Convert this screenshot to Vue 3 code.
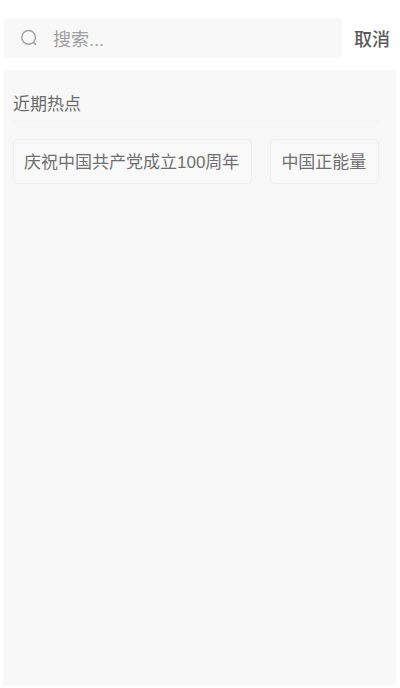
<script setup>
const tags = ['庆祝中国共产党成立100周年', '中国正能量']
</script>

<template>
  <div class="page">
    <header class="top">
      <div class="search">
        <svg class="icon" width="18" height="18" viewBox="0 0 18 18" fill="none" stroke="#a2a2a2" stroke-width="1.5" stroke-linecap="round">
          <circle cx="8.6" cy="8.4" r="6.8" />
          <path d="M13.6 13.4 L15.6 15.4" />
        </svg>
        <span class="placeholder">搜索...</span>
      </div>
      <span class="cancel">取消</span>
    </header>
    <main class="panel">
      <h2 class="title">近期热点</h2>
      <div class="tags">
        <span v-for="t in tags" :key="t" class="tag">{{ t }}</span>
      </div>
    </main>
  </div>
</template>

<style>
html, body { margin: 0; background: #ffffff; }
</style>

<style scoped>
.page {
  width: 400px;
  height: 688px;
  box-sizing: border-box;
  padding: 18px 3px 2px;
  display: flex;
  flex-direction: column;
  gap: 12px;
  font-family: "Liberation Sans", "Noto Sans CJK SC", sans-serif;
  overflow: hidden;
}
.top {
  display: flex;
  align-items: center;
  height: 40px;
  padding-left: 1px;
}
.search {
  width: 338px;
  height: 40px;
  box-sizing: border-box;
  background: #f8f8f8;
  border-radius: 3px;
  display: flex;
  align-items: center;
  padding-left: 16px;
  gap: 15px;
}
.icon { flex: none; }
.placeholder {
  font-size: 18px;
  color: #a0a0a0;
}
.cancel {
  margin-left: 12px;
  font-size: 18px;
  font-weight: 500;
  color: #5a5a5a;
}
.panel {
  flex: 1;
  background: #f8f8f8;
  margin-right: 1px;
  padding: 0 16px 0 10px;
}
.title {
  margin: 0;
  padding: 25px 0 0;
  height: 52px;
  box-sizing: border-box;
  font-size: 17px;
  line-height: 19px;
  font-weight: 400;
  color: #6a6a6a;
  border-bottom: 1px solid #f2f2f2;
}
.tags {
  display: flex;
  gap: 18px;
  margin-top: 17px;
}
.tag {
  height: 45px;
  box-sizing: border-box;
  padding: 0 12px 3px 10px;
  display: flex;
  align-items: center;
  border: 1px solid #efefef;
  border-radius: 5px;
  background: #f9f9f9;
  font-size: 17px;
  color: #707070;
  white-space: nowrap;
}
</style>
